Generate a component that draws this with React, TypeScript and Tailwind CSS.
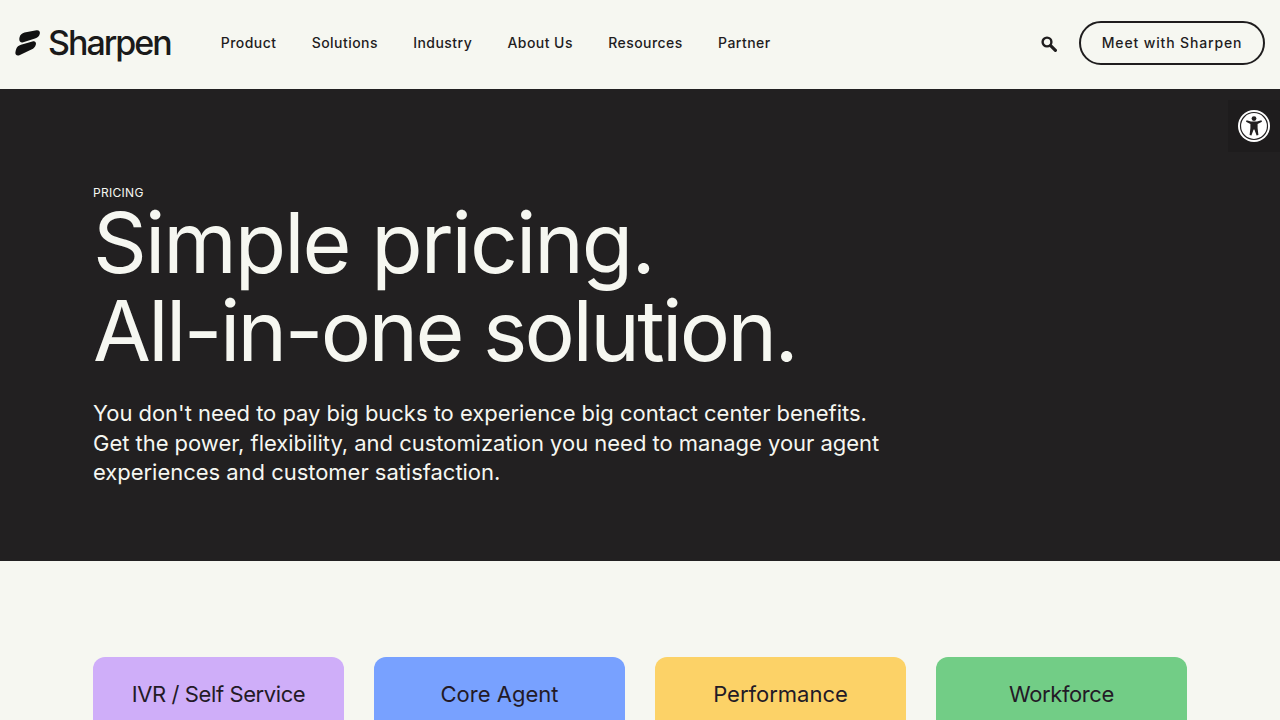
const navItems = ['Product', 'Solutions', 'Industry', 'About Us', 'Resources', 'Partner']

const plans = [
    { name: 'IVR / Self Service', color: 'bg-[#cfaef9] tracking-[-0.4px]' },
    { name: 'Core Agent', color: 'bg-[#78a1ff]' },
    { name: 'Performance', color: 'bg-[#fcd267]' },
    { name: 'Workforce', color: 'bg-[#72cd86] tracking-[-0.4px]' },
]

function Logo() {
    return (
        <div className="flex items-center gap-[7px]">
            <svg width="26" height="26" viewBox="0 0 26 26" fill="#111111">
                <path d="M4.5 7.5 C5.2 4.8 7 3.4 9.5 2.6 L21.5 0.3 C24 0 25.4 1.6 24.8 3.8 C24.2 6.2 22.6 7.8 20 8.6 L7.5 12.4 C5 13 3.8 10.2 4.5 7.5 Z" />
                <path d="M1.2 19 C2 16.8 3.6 15.6 6 14.8 L18.2 11.2 C20.4 10.8 21.4 12.6 20.8 14.8 C20.2 17 18.8 18.6 16.4 19.6 L4.4 25.2 C1.8 26.2 0.2 24.6 0.4 22.6 C0.5 21.2 0.8 20 1.2 19 Z" />
            </svg>
            <span className="text-[34px] leading-none font-medium tracking-[-2px] text-[#1a1a1a]">Sharpen</span>
        </div>
    )
}

function AccessibilityBadge() {
    return (
        <div className="absolute right-0 top-[100px] flex h-[52px] w-[52px] items-center justify-center bg-[#1e1c1d]">
            <svg width="32" height="32" viewBox="0 0 32 32">
                <circle cx="16" cy="16" r="16" fill="white" />
                <circle cx="16" cy="16" r="13.5" fill="none" stroke="#222021" strokeWidth="1.2" />
                <circle cx="16" cy="8.6" r="2.4" fill="#222021" />
                <path d="M8 11.8 L8.6 10.2 L13 11.6 H19 L23.4 10.2 L24 11.8 L19.6 14 V18 L20.4 25 L18.6 25.4 L16.4 19.4 H15.6 L13.4 25.4 L11.6 25 L12.4 18 V14 Z" fill="#222021" />
            </svg>
        </div>
    )
}

export default function App() {
    return (
        <div className="relative h-screen overflow-hidden bg-[#f6f7f1] font-['Inter',sans-serif]">
            {/* Header */}
            <header className="flex h-[89px] items-center pb-[3px] pl-[15px] pr-[15px]">
                <Logo />
                <nav className="mb-[1px] ml-[50px] flex items-center gap-[35.3px]">
                    {navItems.map((item) => (
                        <a key={item} className="text-[14px] font-medium tracking-[0.45px] text-[#1f1d1e]">{item}</a>
                    ))}
                </nav>
                <div className="ml-auto flex items-center gap-[22px]">
                    <svg width="16" height="16" viewBox="0 0 16 16" fill="none" stroke="#1f1d1e" className="mt-[1px]">
                        <circle cx="6" cy="6" r="4.4" strokeWidth="2.4" />
                        <path d="M9.6 9.6 L14.4 14.4" strokeWidth="3.2" strokeLinecap="round" />
                    </svg>
                    <button className="h-[44px] w-[186px] rounded-full border-2 border-[#1f1d1e] pb-[2px] text-[14px] font-medium tracking-[0.85px] text-[#1f1d1e]">
                        Meet with Sharpen
                    </button>
                </div>
            </header>

            {/* Hero */}
            <section className="h-[472px] bg-[#222021] pl-[93px] pt-[97px] text-[#f6f7f1]">
                <div className="text-[12px] leading-[14px] tracking-[0.3px]">PRICING</div>
                <h1 className="mt-[-1px] text-[84px] leading-[88px] font-normal tracking-[-2px]">
                    Simple pricing.
                    <br />
                    <span className="tracking-[-2.6px]">All-in-one solution.</span>
                </h1>
                <p className="mt-[24px] w-[800px] text-[22px] leading-[29.5px] tracking-[-0.03px]">
                    You don't need to pay big bucks to experience big contact center benefits.
                    <br />
                    Get the power, flexibility, and customization you need to manage your agent experiences and customer satisfaction.
                </p>
            </section>

            {/* Plans */}
            <section className="grid grid-cols-4 gap-[30px] pl-[93px] pr-[93px] pt-[96px]">
                {plans.map((plan) => (
                    <div key={plan.name} className={`h-[120px] rounded-[12px] pt-[21px] text-center text-[22px] leading-[32px] text-[#231a26] ${plan.color}`}>
                        {plan.name}
                    </div>
                ))}
            </section>

            <AccessibilityBadge />
        </div>
    )
}
